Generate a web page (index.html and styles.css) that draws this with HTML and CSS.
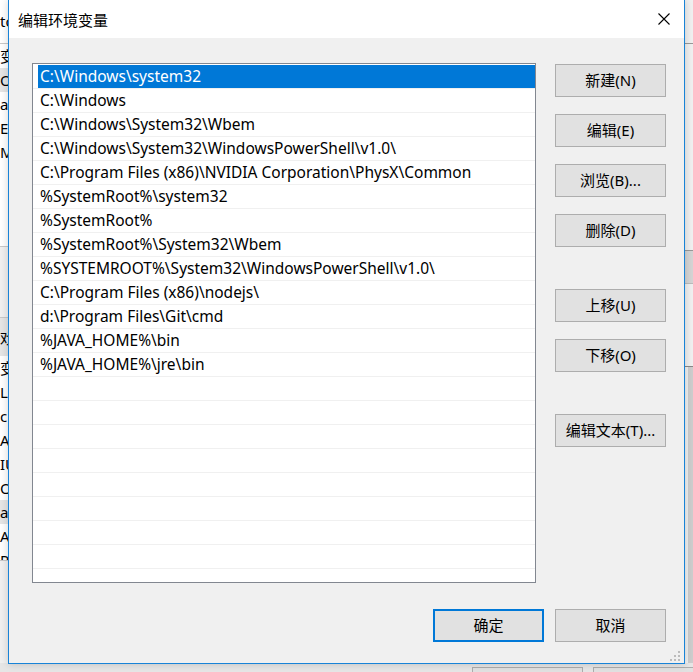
FILE: index.html
```html
<!DOCTYPE html>
<html lang="zh-CN">
<head>
<meta charset="utf-8">
<title>编辑环境变量</title>
<link rel="stylesheet" href="styles.css">
</head>
<body>
<div class="desktop">
  <div class="backwin">
    <div class="back-left">
      <div class="bl-top">tc</div>
      <div class="bl-row">变</div>
      <div class="bl-row shade">Or</div>
      <div class="bl-row">a</div>
      <div class="bl-row">E</div>
      <div class="bl-row">M</div>
      <div class="bl-gap1"></div>
      <div class="bl-gap2"></div>
      <div class="bl-row tall shade">戏</div>
      <div class="bl-row">变</div>
      <div class="bl-row">L</div>
      <div class="bl-row">c</div>
      <div class="bl-row">A</div>
      <div class="bl-row">IU</div>
      <div class="bl-row">OS</div>
      <div class="bl-row shade">a</div>
      <div class="bl-row">A</div>
      <div class="bl-row cut">P</div>
      <div class="bl-grey"></div>
    </div>
    <div class="back-mid"></div>
    <div class="back-right">
      <div class="br-a"></div>
      <div class="br-b"></div>
      <div class="br-c"></div>
      <div class="br-d"></div>
      <div class="br-e"></div>
    </div>
    <div class="back-bottom">
      <div class="bb-btn one"></div>
      <div class="bb-btn two"></div>
    </div>
  </div>

  <div class="dialog">
    <div class="titlebar">
      <span class="title">编辑环境变量</span>
      <svg class="close" width="12" height="12" viewBox="0 0 12 12"><path d="M0.5 0.5 L11.5 11.5 M11.5 0.5 L0.5 11.5" stroke="#000" stroke-width="1.1" fill="none"/></svg>
    </div>
    <div class="body">
      <div class="main">
        <div class="list">
          <div class="row sel">C:\Windows\system32</div>
          <div class="row">C:\Windows</div>
          <div class="row">C:\Windows\System32\Wbem</div>
          <div class="row">C:\Windows\System32\WindowsPowerShell\v1.0\</div>
          <div class="row">C:\Program Files (x86)\NVIDIA Corporation\PhysX\Common</div>
          <div class="row">%SystemRoot%\system32</div>
          <div class="row">%SystemRoot%</div>
          <div class="row">%SystemRoot%\System32\Wbem</div>
          <div class="row">%SYSTEMROOT%\System32\WindowsPowerShell\v1.0\</div>
          <div class="row">C:\Program Files (x86)\nodejs\</div>
          <div class="row">d:\Program Files\Git\cmd</div>
          <div class="row">%JAVA_HOME%\bin</div>
          <div class="row">%JAVA_HOME%\jre\bin</div>
          <div class="row"></div>
          <div class="row"></div>
          <div class="row"></div>
          <div class="row"></div>
          <div class="row"></div>
          <div class="row"></div>
          <div class="row"></div>
          <div class="row"></div>
          <div class="row"></div>
        </div>
        <div class="side">
          <button class="btn">新建(N)</button>
          <button class="btn">编辑(E)</button>
          <button class="btn">浏览(B)...</button>
          <button class="btn">删除(D)</button>
          <button class="btn spaced">上移(U)</button>
          <button class="btn">下移(O)</button>
          <button class="btn spaced">编辑文本(T)...</button>
        </div>
      </div>
      <div class="footer">
        <button class="btn default">确定</button>
        <button class="btn">取消</button>
      </div>
    </div>
    <svg class="grip" width="11" height="11" viewBox="0 0 11 11">
      <rect x="8" y="0" width="2" height="2" fill="#bcbcbc"/>
      <rect x="4" y="4" width="2" height="2" fill="#bcbcbc"/>
      <rect x="8" y="4" width="2" height="2" fill="#bcbcbc"/>
      <rect x="0" y="8" width="2" height="2" fill="#bcbcbc"/>
      <rect x="4" y="8" width="2" height="2" fill="#bcbcbc"/>
      <rect x="8" y="8" width="2" height="2" fill="#bcbcbc"/>
    </svg>
  </div>
</div>
</body>
</html>
```

FILE: styles.css
```css
html, body {
  margin: 0;
  padding: 0;
}
body {
  width: 693px;
  height: 672px;
  overflow: hidden;
  font-family: "Noto Sans", "Noto Sans CJK SC", sans-serif;
  font-size: 15px;
  color: #000;
}
.desktop {
  position: relative;
  width: 693px;
  height: 672px;
  background: #f0f0f0;
  overflow: hidden;
}

/* background window */
.backwin {
  display: grid;
  grid-template-columns: 8px 1fr 8px;
  grid-template-rows: 663px 9px;
  height: 100%;
}
.back-left {
  background: #fff;
  overflow: hidden;
  white-space: nowrap;
  display: flex;
  flex-direction: column;
  font-family: "Noto Sans", "Noto Sans CJK SC", sans-serif;
}
.bl-top {
  height: 43px;
  line-height: 42px;
  border-bottom: 1px solid #c8c8c8;
  flex: none;
}
.bl-row {
  height: 24px;
  line-height: 24px;
  flex: none;
}
.bl-row.shade { background: #e5e5e5; }
.bl-row.tall { height: 38px; line-height: 40px; border-top: 1px solid #c8c8c8; }
.bl-row.cut { height: 12px; line-height: 24px; overflow: hidden; border-bottom: 1px solid #c8c8c8; }
.bl-gap1 { height: 82px; flex: none; border-bottom: 1px solid #c8c8c8; }
.bl-gap2 { height: 70px; flex: none; background: #f0f0f0; }
.bl-grey {
  flex: 1;
  background: #f0f0f0;
}
.back-right {
  background: #f0f0f0;
  display: flex;
  flex-direction: column;
}
.br-a { height: 43px; border-bottom: 1px solid #999; flex: none; }
.br-b { height: 206px; border-bottom: 1px solid #999; flex: none; }
.br-c { height: 32px; background: #d4d4d4; flex: none; border-bottom: 1px solid #bbb; }
.br-d { height: 82px; border-bottom: 1px solid #888; flex: none; }
.br-e { flex: 1; background: linear-gradient(90deg, #f0f0f0 3px, #cdcdcd 3px); }
.back-bottom {
  grid-column: 1 / span 3;
  background: #e6e6e6;
  display: flex;
  padding-left: 472px;
  gap: 10px;
  padding-top: 4px;
}
.bb-btn {
  height: 10px;
  border: 1px solid #adadad;
  background: #e1e1e1;
  flex: none;
}
.bb-btn.one { width: 109px; }
.bb-btn.two { width: 109px; }

/* dialog */
.dialog {
  position: absolute;
  left: 8px;
  top: 0;
  width: 675px;
  height: 663px;
  border: 1px solid #1883d7;
  border-top: none;
  background: #f0f0f0;
  box-shadow: 0 0 8px rgba(0,0,0,0.18);
  display: flex;
  flex-direction: column;
}
.titlebar {
  height: 38px;
  background: #fff;
  display: flex;
  align-items: center;
  justify-content: space-between;
  padding: 0 14px 0 9px;
  flex: none;
}
.title {
  font-family: "Noto Sans CJK SC", sans-serif;
  font-size: 15px;
  line-height: 20px;
  margin-top: 1px;
}
.close { display: block; }

.body {
  padding: 25px 18px 0 23px;
  display: flex;
  flex-direction: column;
}
.main {
  display: flex;
  gap: 19px;
}
.list {
  width: 504px;
  height: 520px;
  box-sizing: border-box;
  border: 1px solid #828790;
  background: #fff;
  padding-top: 1px;
  overflow: hidden;
  flex: none;
}
.row {
  height: 24px;
  box-sizing: border-box;
  border-bottom: 1px solid #f0f0f0;
  padding-left: 7px;
  line-height: 23px;
  white-space: nowrap;
  font-family: "Noto Sans", sans-serif;
  font-size: 15.5px;
}
.row.sel {
  background: linear-gradient(90deg, #fff 5px, #0078d7 5px);
  color: #fff;
}
.side {
  display: flex;
  flex-direction: column;
  gap: 17px;
  padding-top: 1px;
  width: 111px;
}
.btn {
  width: 111px;
  height: 33px;
  box-sizing: border-box;
  border: 1px solid #adadad;
  background: #e1e1e1;
  font-family: "Noto Sans", "Noto Sans CJK SC", sans-serif;
  font-size: 15px;
  color: #000;
  padding: 0 0 1px 0;
  margin: 0;
  line-height: 20px;
  flex: none;
}
.btn.spaced { margin-top: 25px; }
.btn.default { border: 2px solid #0078d7; }
.footer {
  display: flex;
  justify-content: flex-end;
  gap: 11px;
  margin-top: 26px;
}
.grip {
  position: absolute;
  right: 3px;
  bottom: 1px;
}
```
